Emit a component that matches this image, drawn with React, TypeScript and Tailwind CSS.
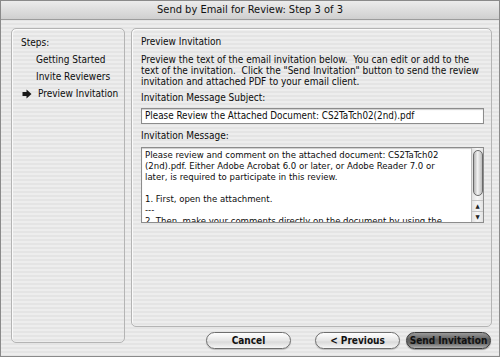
import React from 'react';

const FONT = { fontFamily: '"DejaVu Sans Condensed", "DejaVu Sans", "Liberation Sans", sans-serif', fontStretch: 'condensed' as const };

function StepArrow() {
  return (
    <svg width="10" height="10" viewBox="0 0 10 10" className="shrink-0">
      <path d="M0.5 3 H4.5 V0.5 L9.5 5 L4.5 9.5 V7 H0.5 Z" fill="#1a1a1a" />
    </svg>
  );
}

function AquaButton({ label, primary }: { label: string; primary?: boolean }) {
  return (
    <button
      type="button"
      className={
        primary
          ? 'h-[17px] w-[85px] rounded-full border border-[#3a3a3a] bg-[linear-gradient(180deg,#9a9a9a_0%,#5e5e5e_45%,#6c6c6c_70%,#b0b0b0_100%)] text-[10px] font-bold leading-none text-[#111] shadow-[0_1px_1px_rgba(0,0,0,0.35)]'
          : 'h-[17px] w-[85px] rounded-full border border-[#6e6e6e] bg-[linear-gradient(180deg,#ffffff_0%,#e6e6e6_50%,#dadada_60%,#f6f6f6_100%)] text-[10px] font-bold leading-none text-[#111] shadow-[0_1px_1px_rgba(0,0,0,0.2)]'
      }
    >
      {label}
    </button>
  );
}

function ScrollBar() {
  return (
    <div className="flex w-[12px] shrink-0 flex-col border-l border-[#bdbdbd] bg-[linear-gradient(90deg,#e2e2e2,#f7f7f7_50%,#e2e2e2)]">
      <div className="mx-auto mt-[2px] h-[46px] w-[10px] rounded-full border border-[#6a6a6a] bg-[linear-gradient(90deg,#b4b4b4,#f2f2f2_45%,#bcbcbc)]" />
      <div className="flex-1" />
      <div className="flex h-[11px] items-center justify-center border-t border-[#c4c4c4] text-[6px] leading-none text-[#222]">▲</div>
      <div className="flex h-[11px] items-center justify-center border-t border-[#c4c4c4] text-[6px] leading-none text-[#222]">▼</div>
    </div>
  );
}

export default function App() {
  return (
    <div
      style={FONT}
      className="flex h-[357px] w-[500px] flex-col overflow-hidden border border-[#8a8a8a] bg-[repeating-linear-gradient(180deg,#ededed_0px,#ededed_2px,#e4e4e4_2px,#e4e4e4_4px)] text-[#0c0c0c]"
    >
      <div className="flex h-[19px] shrink-0 items-center justify-center border-b border-[#9c9c9c] bg-[linear-gradient(180deg,#ececec,#cfcfcf)] text-[11px] text-[#111]">
        Send by Email for Review: Step 3 of 3
      </div>

      <div className="flex flex-1 pt-[8px] pl-[10px]">
        <div className="h-[315px] w-[114px] shrink-0 rounded-[5px] border border-[#b4b4b4] pt-[7px] pl-[9px] text-[10px] shadow-[inset_1px_1px_0_#fafafa]">
          <div className="leading-[13px]">Steps:</div>
          <div className="mt-[4px] flex flex-col gap-[4px] pl-[15px] leading-[13px]">
            <div>Getting Started</div>
            <div>Invite Reviewers</div>
          </div>
          <div className="mt-[4px] flex items-center gap-[6px] pl-[1px] leading-[13px]">
            <StepArrow />
            <span>Preview Invitation</span>
          </div>
        </div>

        <div className="ml-[6px] flex w-[361px] flex-col">
          <div className="h-[299px] rounded-[5px] border border-[#b4b4b4] pt-[6px] pl-[9px] pr-[8px] text-[10px] shadow-[inset_1px_1px_0_#fafafa]">
            <div className="leading-[13px]">Preview Invitation</div>
            <p className="mt-[6px] whitespace-pre leading-[11px]">
              {'Preview the text of the email invitation below.  You can edit or add to the\ntext of the invitation.  Click the "Send Invitation" button to send the review\ninvitation and attached PDF to your email client.'}
            </p>
            <div className="mt-[4px] leading-[13px]">Invitation Message Subject:</div>
            <div className="mt-[4px] flex h-[16px] w-[343px] items-center border border-[#8c8c8c] bg-white px-[3px] text-[9.8px] shadow-[inset_0_1px_1px_rgba(0,0,0,0.2)]">
              Please Review the Attached Document: CS2TaTch02(2nd).pdf
            </div>
            <div className="mt-[5px] leading-[13px]">Invitation Message:</div>
            <div className="mt-[5px] flex h-[76px] w-[343px] overflow-hidden border border-[#8c8c8c] bg-white shadow-[inset_0_1px_1px_rgba(0,0,0,0.2)]">
              <div className="flex-1 overflow-hidden px-[3px] pt-[1px] text-[9.5px] leading-[11px]">
                <div>Please review and comment on the attached document: CS2TaTch02</div>
                <div>(2nd).pdf. Either Adobe Acrobat 6.0 or later, or Adobe Reader 7.0 or</div>
                <div>later, is required to participate in this review.</div>
                <div className="h-[11px]" />
                <div>1. First, open the attachment.</div>
                <div>---</div>
                <div>2. Then, make your comments directly on the document by using the</div>
              </div>
              <ScrollBar />
            </div>
          </div>

          <div className="mt-[5px] flex items-center justify-end pr-[1px]">
            <AquaButton label="Cancel" />
            <div className="w-[24px]" />
            <AquaButton label="< Previous" />
            <div className="w-[6px]" />
            <AquaButton label="Send Invitation" primary />
          </div>
        </div>
      </div>
    </div>
  );
}
